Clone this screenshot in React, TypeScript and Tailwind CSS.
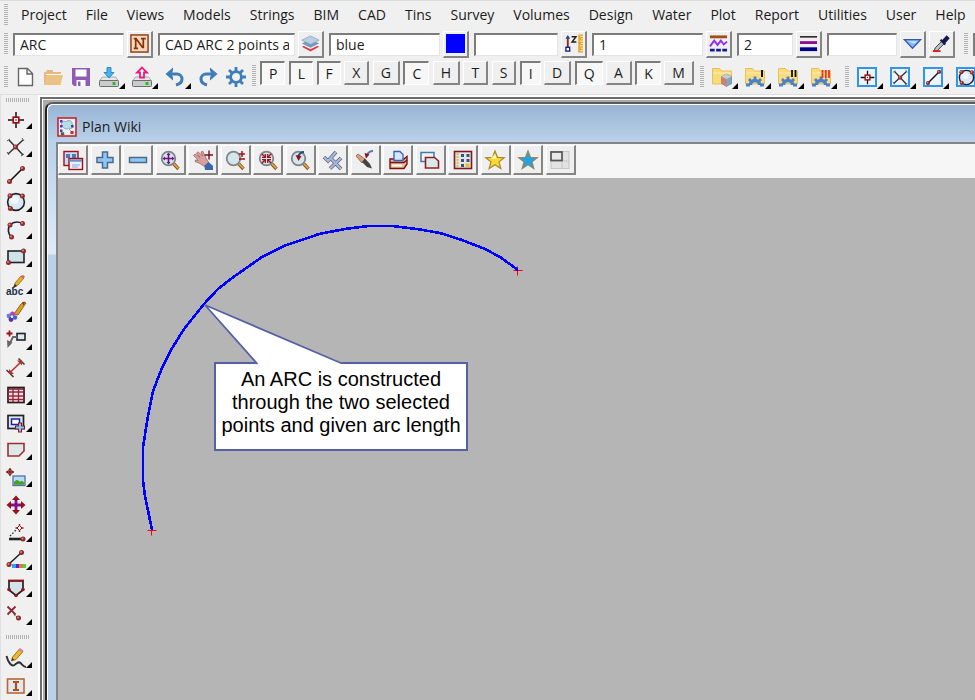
import React from "react";

type IconName = string;

const RED = "#a01018";

function Dot({ x, y }: { x: number; y: number }) {
  return (
    <g>
      <circle cx={x} cy={y} r="2.5" fill="#8c2a2e" />
      <circle cx={x - 0.5} cy={y - 0.6} r="1" fill="#d98a8a" />
    </g>
  );
}

function Lens() {
  return (
    <g>
      <path d="M13.5 13.5l5 5.5" stroke="#8a5a20" strokeWidth="3.4" />
      <path d="M13.5 13.5l5 5" stroke="#e8a850" strokeWidth="1.6" />
      <circle cx="8.5" cy="8.5" r="6.8" fill="#d5e6ea" stroke="#7c868c" strokeWidth="1.8" />
    </g>
  );
}

function Folder() {
  return (
    <g>
      <path d="M0.5 1.5h7l2 2.5h10v13h-19z" fill="#f9dc7c" stroke="#e6c060" />
      <path d="M1 6h18" stroke="#fce9a0" strokeWidth="1.5" />
    </g>
  );
}

function GearHalf() {
  return (
    <g fill="none" stroke="#4a80cc">
      <path d="M5.500 18a4.500 4.500 0 0 1 9 0" strokeWidth="3.400" />
      <path d="M10 13v-3.500M6.300 14.500L4 12M13.700 14.500L16 12M5 18H1M15 18h4" strokeWidth="2.800" />
    </g>
  );
}

const starPath = "M10 1l2.5 6.3 6.8.4-5.3 4.2 1.9 6.7L10 14.8l-5.9 3.8L6 11.9.7 7.7l6.8-.4z";

const pointShape = (
  <g>
    <path d="M10 2v16M2 10h16" stroke="#111" strokeWidth="1.5" />
    <rect x="7.2" y="7.2" width="5.6" height="5.6" fill="#fff" stroke={RED} strokeWidth="1.7" />
    <rect x="9.3" y="9.3" width="1.4" height="1.4" fill={RED} />
  </g>
);
const crossShape = (
  <g>
    <path d="M3 3l14 15M2 17L17 3" stroke="#333" strokeWidth="1.5" />
    <path d="M1 4l3-2M16 1l2 3M1 15l2 3M15 19l3-2" stroke="#555" strokeWidth="1" />
    <Dot x={9.5} y={10} />
  </g>
);
const lineShape = (
  <g>
    <path d="M3 17L17 3" stroke="#111" strokeWidth="1.6" />
    <Dot x={3.5} y={16.5} />
    <Dot x={16.5} y={3.5} />
  </g>
);
const circleShape = (
  <g>
    <circle cx="10" cy="10" r="8.4" fill="#d9e8f6" stroke="#222" strokeWidth="1.6" />
    <circle cx="8.5" cy="8" r="4" fill="#f0f7fd" />
    <Dot x={4} y={3.8} />
    <Dot x={16.4} y={4} />
    <Dot x={4.4} y={16.4} />
  </g>
);
const drive = (
  <g>
    <path d="M3.500 10h13l3 4h-19z" fill="#e4e6e8" stroke="#999" strokeWidth="0.8" />
    <rect x="0.5" y="13.500" width="19" height="6" rx="1" fill="#c8cccf" stroke="#6c6c6c" />
    <rect x="13.5" y="15" width="3" height="3" fill="#38b820" />
  </g>
);

const icons: Record<IconName, React.ReactNode> = {
  newFile: <path d="M3.5 1.5h9l5 5v12h-14zM12 1.5v5.5h5.500" fill="#fff" stroke="#666" strokeWidth="1.4" />,
  open: (
    <g>
      <path d="M1 17V5h2l1-2h6v2h8v5" fill="#e4b880" />
      <path d="M4 8h16l-2.500 10H1z" fill="#ecc284" />
      <path d="M3 7.500h15" stroke="#fff" />
    </g>
  ),
  save: (
    <g>
      <path d="M1 1h18v18H3l-2-2z" fill="#8e5bb5" />
      <path d="M4.500 2.500h11v7h-11zM5.500 13h9v6h-9z" fill="#fff" />
      <path d="M7 14.500h2.500v4.500H7z" fill="#8e5bb5" />
    </g>
  ),
  importIcon: (
    <g>
      {drive}
      <path d="M8 0.500h4v5h3L10 11 5 5.500h3z" fill="#48b4ea" stroke="#1878b8" strokeWidth="0.8" />
    </g>
  ),
  exportIcon: (
    <g>
      {drive}
      <path d="M8 10.500h4v-5h3L10 0.500 5 5.500h3z" fill="#fff" stroke="#f01878" strokeWidth="1.8" />
    </g>
  ),
  undo: (
    <g>
      <path d="M5 7h7a5 5 0 0 1 5 5c0 3-2 5-6 6" fill="none" stroke="#3f7cb8" strokeWidth="3" />
      <path d="M0.500 7L8 0.500v3L6.500 7 8 10.500v3z" fill="#3f7cb8" />
    </g>
  ),
  redo: (
    <g>
      <path d="M15 7H8a5 5 0 0 0-5 5c0 3 2 5 6 6" fill="none" stroke="#3f7cb8" strokeWidth="3" />
      <path d="M19.500 7L12 0.500v3L13.500 7 12 10.500v3z" fill="#3f7cb8" />
    </g>
  ),
  gear: (
    <g fill="none" stroke="#3f7cb8">
      <circle cx="10" cy="10" r="5.400" strokeWidth="2.800" />
      <path d="M10 0v4M10 16v4M0 10h4M16 10h4M3 3l2.800 2.800M14.200 14.200L17 17M3 17l2.800-2.800M14.200 5.800L17 3" strokeWidth="2.800" />
    </g>
  ),
  folderCube: (
    <g>
      <Folder />
      <path d="M14.500 7l5 2.500v7l-5 3-5-3v-7z" fill="#7aa8d0" stroke="#777" strokeWidth="0.600" />
      <path d="M14.500 12v7.500l-5-3v-7z" fill="#d08068" />
      <path d="M14.500 7l5 2.500-5 2.500-5-2.500z" fill="#c4ccd4" />
    </g>
  ),
  folder1: <g><Folder /><GearHalf /><path d="M17 3v7" stroke="#111" strokeWidth="2" /></g>,
  folder2: <g><Folder /><GearHalf /><path d="M14 3v7M17.500 3v7" stroke="#111" strokeWidth="1.800" /></g>,
  folder3: <g><Folder /><GearHalf /><path d="M11.500 3v8M14.800 3v8M18 3v8" stroke="#f03020" strokeWidth="1.800" /></g>,
  point: pointShape,
  cross: crossShape,
  line: lineShape,
  circle: circleShape,
  arc: (
    <g>
      <path d="M4 17A9 9 0 0 1 17 3.500L10 10z" fill="#e8f1fa" />
      <path d="M5.500 17A9 9 0 0 1 4 5Q9 0 16.500 3.500" fill="none" stroke="#222" strokeWidth="1.600" />
      <Dot x={4} y={5} /><Dot x={16.500} y={3.500} /><Dot x={5.500} y={17} />
    </g>
  ),
  rect: (
    <g>
      <rect x="2" y="4" width="16" height="11.500" fill="#cfe2e8" stroke="#222" strokeWidth="1.600" />
      <Dot x={17.500} y={4} /><Dot x={2.500} y={15.500} />
    </g>
  ),
  text: (
    <g>
      <path d="M8 12l1-4 6-7 3 2-6 7z" fill="#e8b020" stroke="#80601a" strokeWidth="0.700" />
      <path d="M14 1.500l3-1.500 2 1.500-1.500 2z" fill="#d86060" />
      <path d="M6 14l3-5 2 2z" fill="#333" />
      <text x="0" y="19.500" fontSize="10" fontWeight="700" fill="#1c3048" className="font-['Liberation_Sans',sans-serif]">abc</text>
    </g>
  ),
  paint: (
    <g>
      <path d="M8 12l7-10 3-2 2 1-8 12z" fill="#d8a020" stroke="#805010" strokeWidth="0.800" />
      <path d="M16 0l3 0-1.500 4z" fill="#9a3020" />
      <circle cx="6.500" cy="12" r="2.400" fill="#c040b0" /><circle cx="3" cy="14" r="2.400" fill="#6080e0" />
      <circle cx="5" cy="17.500" r="2.400" fill="#6030a0" /><circle cx="9" cy="15.500" r="2.200" fill="#4060d8" />
      <circle cx="6" cy="14.800" r="1.200" fill="#fff" />
    </g>
  ),
  leader: (
    <g>
      <path d="M0.500 3.500h6M3.500 0.500v6" stroke={RED} strokeWidth="1.800" />
      <rect x="11" y="3.500" width="8" height="6.500" fill="#d9eaf0" stroke="#222" strokeWidth="1.600" />
      <path d="M11 7H7l-4 8" stroke="#666" strokeWidth="1.800" fill="none" />
      <path d="M1 10l5.500 2.500L1.500 18z" fill="#666" />
    </g>
  ),
  dimension: (
    <g>
      <path d="M0.500 12l7 7M12.500 0.500l6 6" stroke="#444" strokeWidth="1.700" />
      <path d="M4 14.500L15 4" stroke="#c03030" strokeWidth="1.600" />
      <path d="M3 16v-5l5 5zM16 2.500v5l-5-5z" fill="#c03030" />
    </g>
  ),
  table: (
    <g>
      <rect x="2" y="2.500" width="16" height="15" fill="#fbe9ec" stroke="#2a1a20" strokeWidth="1.700" />
      <path d="M2.500 4h15" stroke="#701828" strokeWidth="1.500" />
      <path d="M2 7h16M2 11h16M2 14.500h16M7 4v13M12.500 4v13" stroke="#a02038" strokeWidth="1.400" />
    </g>
  ),
  viewport: (
    <g>
      <rect x="2" y="2.500" width="15.500" height="13" fill="#dbe8ee" stroke="#222" strokeWidth="1.700" />
      <rect x="5.500" y="6" width="8" height="5.500" fill="#fff" stroke="#2020b0" strokeWidth="1.500" />
      <path d="M12.500 10h3v3h3v3h-3v3h-3v-3h-3v-3h3z" fill="#90c8f0" stroke="#782030" strokeWidth="1.100" />
    </g>
  ),
  polygon: <path d="M2 3.500h16V11l-5 5H2z" fill="#dce8ea" stroke="#9a3030" strokeWidth="1.600" />,
  image: (
    <g>
      <path d="M4 0v8M0 4h8" stroke="#801818" strokeWidth="1.400" />
      <circle cx="4" cy="4" r="2.400" fill="none" stroke="#801818" />
      <rect x="7" y="8" width="12" height="9.500" fill="#b8daf4" stroke="#5570a8" strokeWidth="1.300" />
      <path d="M8 16.800v-3l3-2 3 2 2-1 2.200 2v2z" fill="#48a020" />
    </g>
  ),
  move: (
    <g>
      <path d="M10 3v14M3 10h14" stroke="#801080" strokeWidth="2.800" />
      <path d="M10 0.500l4 4.500H6zM10 19.500l4-4.500H6zM0.500 10L5 6v8zM19.500 10L15 6v8z" fill="#98101c" />
    </g>
  ),
  snap: (
    <g>
      <path d="M13.500 1v8M9.500 5h8" stroke={RED} strokeWidth="1.400" />
      <path d="M13.500 2.500L16 5l-2.500 2.500L11 5z" fill="#fff" stroke={RED} />
      <path d="M3 16h14" stroke="#222" strokeWidth="2.600" />
      <path d="M4 13l6-6" stroke="#222" strokeWidth="1.300" strokeDasharray="1.500 1.800" />
      <Dot x={17} y={16} />
    </g>
  ),
  colourLine: (
    <g>
      <path d="M3 14L15.500 2.500" stroke="#222" strokeWidth="1.600" /><Dot x={3} y={14.500} /><Dot x={15.500} y={2.500} />
      <rect x="6" y="14" width="4" height="4" fill="#30a0f8" /><rect x="10" y="14" width="3.500" height="4" fill="#6020c0" />
      <rect x="13.500" y="14" width="3.500" height="4" fill="#f87028" /><rect x="17" y="14" width="3" height="4" fill="#30e830" />
    </g>
  ),
  shield: (
    <g>
      <path d="M3 3h14v9l-7 5.500L3 12z" fill="#d3e4e8" stroke="#222" strokeWidth="1.700" />
      <path d="M2 2.500h16" stroke={RED} strokeWidth="1.800" />
      <circle cx="3" cy="11.500" r="1.800" fill={RED} /><circle cx="17" cy="11.500" r="1.800" fill={RED} /><circle cx="10" cy="17.500" r="1.800" fill={RED} />
    </g>
  ),
  deletePoint: <g><path d="M1.500 1.500l8 8M9.500 1.500l-8 8" stroke="#902830" strokeWidth="1.800" /><path d="M8 9l4 4" stroke="#555" strokeWidth="1.400" strokeDasharray="2 1" /><Dot x={12.500} y={13} /></g>,
  freehand: (
    <g>
      <path d="M0.500 8c1.500 6 5 11 8 9s4-4 6-2 3 4 5.500 4" fill="none" stroke="#333" strokeWidth="2" />
      <path d="M5.500 13l1-4 7-8 3.500 2.500-7 8z" fill="#f0b828" stroke="#80601a" strokeWidth="0.800" />
      <path d="M12.500 2l1.500-2 3.500 2.500L16 4.500z" fill="#e08090" /><path d="M5.500 13l.7-3 2 1.600z" fill="#333" />
    </g>
  ),
  textBox: (
    <g>
      <rect x="1.500" y="3" width="16.500" height="14" fill="#deeaee" stroke="#b86838" strokeWidth="1.600" />
      <path d="M7 6h6M7 14h6M10 6v8" stroke="#b05020" strokeWidth="2.200" />
    </g>
  ),
  nBadge: (
    <g>
      <rect x="1" y="1" width="18" height="18" fill="#f6d8bc" stroke="#8a3c12" strokeWidth="1.500" />
      <path d="M4 4.800h3M11.500 4.800h5M4 15.200h4.500M6 5v10M14 5v10M6.500 5l7 9.500" fill="none" stroke="#8a3008" strokeWidth="1.800" />
    </g>
  ),
  layers: (
    <g>
      <path d="M10 9l9 4.500-9 5-9-5z" fill="#e03848" /><path d="M10 6.500l9 5-9 4.500-9-4.500z" fill="#f0f4f8" />
      <path d="M10 5.500l9 4.500-9 4.500L1 10z" fill="#7898b8" /><path d="M10 2l9 4.500-9 4.500-9-4.500z" fill="#b8d0e4" stroke="#7898b8" strokeWidth="0.700" />
    </g>
  ),
  blue: <rect x="0" y="0" width="20" height="20" fill="#0000ff" />,
  zRuler: (
    <g>
      <path d="M4 3v12" stroke="#803020" strokeWidth="2" /><path d="M1.500 5L4 1l2.500 4z" fill="#284880" />
      <rect x="2" y="14" width="4" height="4" fill="#fff" stroke="#102080" strokeWidth="1.400" />
      <path d="M8 3h4.500L8.500 8.500H13" fill="none" stroke="#222" strokeWidth="1.600" />
      <rect x="15" y="0.500" width="5" height="19" fill="#e8a830" /><path d="M17 2.500h3M18 5h2M17 7.500h3M18 10h2M17 12.500h3M18 15h2M17 17.500h3" stroke="#fff0b0" />
    </g>
  ),
  lineStyle: (
    <g>
      <path d="M1 3h18" stroke="#a05010" strokeWidth="3" />
      <path d="M1 13l4.500-6 3.500 4.500 3.500-4.500 3 4 3.500-3" fill="none" stroke="#9030f0" strokeWidth="2" />
      <path d="M1 17h18" stroke="#102090" strokeWidth="3" strokeDasharray="5 1.500" />
    </g>
  ),
  weight: <g><path d="M1 3h18" stroke="#111" strokeWidth="1.500" /><path d="M1 9h18" stroke="#901090" strokeWidth="3" /><path d="M1 16h18" stroke="#000088" strokeWidth="4" /></g>,
  down: <g><path d="M1.500 6h17l-8.500 9z" fill="#88bcf4" stroke="#3858b0" strokeWidth="1.400" /><path d="M5 7.500h10l-3 2.500z" fill="#d0e6fc" /></g>,
  dropper: (
    <g>
      <path d="M2 18.500l1.500-4L10 8l2.500 2.500-7 7z" fill="#b8c4c8" stroke="#333" />
      <path d="M9 6l5 5M11.500 7.500l4-4.500 1.500 1.500-4 4.500z" fill="#181850" stroke="#181850" strokeWidth="2.400" />
      <path d="M1 18h8" stroke="#e02020" strokeWidth="2" />
    </g>
  ),
  windows: (
    <g>
      <rect x="1" y="1.500" width="14" height="14" fill="#c8dcf4" stroke={RED} strokeWidth="1.400" />
      <path d="M3 4h4v4H3zM9 4h4v4H9z" fill="#5078c0" />
      <rect x="6" y="8.500" width="13.500" height="11" fill="#e8f0fc" stroke={RED} strokeWidth="1.400" />
      <path d="M6.500 10.500h12.500" stroke="#6a90d0" strokeWidth="2.400" /><path d="M9 15h8M9 17h6" stroke="#88a8d8" />
    </g>
  ),
  plus: <path d="M7.500 2h5v5.500H18v5h-5.500V18h-5v-5.500H2v-5h5.500z" fill="#8cc8f4" stroke="#506888" strokeWidth="1.500" />,
  minus: <rect x="1.500" y="7.500" width="17" height="5" fill="#8cc8f4" stroke="#506888" strokeWidth="1.500" />,
  zoomAll: <g><Lens /><path d="M8.500 4v9M4 8.500h9" stroke="#701080" strokeWidth="1.600" /><path d="M8.500 2.500l2 2.500h-4zM8.500 14.500l2-2.500h-4zM2.500 8.500L5 6.500v4zM14.500 8.500L12 6.500v4z" fill="#701080" /></g>,
  pan: (
    <g>
      <path d="M0.500 5.500L2 4l5 3.500L3.500 3 5 1.800 9.500 6 8 2l1.800-.8L13 8l3 5-4 4-5-3.500-5-2 .5-1.500 3 .5z" fill="#d8a09c" stroke="#a06868" strokeWidth="0.800" />
      <path d="M11.500 15.500l4-3.500 4.500 4v4h-8z" fill="#3868a8" />
      <path d="M16 0.500v9M11.500 5h8.500" stroke="#701020" strokeWidth="1.400" />
    </g>
  ),
  zoomPm: <g><Lens /><path d="M17 1v6M14 4h6M14 9h6" stroke={RED} strokeWidth="1.500" /></g>,
  zoomIn: <g><Lens /><path d="M4 4l3 3M13 4l-3 3M4 13l3-3M13 13l-3-3" stroke={RED} strokeWidth="1.400" /><path d="M7.300 4v3.300H4M9.700 4v3.300H13M7.300 13V9.700H4M9.700 13V9.700H13" fill="none" stroke={RED} strokeWidth="1.300" /></g>,
  zoomPrev: <g><Lens /><path d="M14 2c-3 0-5 2-6 5" stroke="#284880" strokeWidth="2" fill="none" /><path d="M5.500 5l6 1-3 5z" fill="#901020" /></g>,
  checks: (
    <g fill="none">
      <path d="M1 7l4 4 8-9M7 18.500L18 8M8 8.500l10 10.500" stroke="#785068" strokeWidth="3.600" />
      <path d="M1 7l4 4 8-9M7 18.500L18 8M8 8.500l10 10.500" stroke="#98bce0" strokeWidth="2.400" />
    </g>
  ),
  brush: (
    <g>
      <path d="M1 6l2-2 7 5-3 4z" fill="#d8a080" stroke="#806050" strokeWidth="0.800" /><path d="M7 12l3-3.500 5 5.500 2 4.500-5-1.500z" fill="#444" />
      <path d="M18 1c-4 0-5 2-6 4" stroke="#5878a8" strokeWidth="2" fill="none" /><path d="M9.500 3l5 1.500-3.500 4z" fill="#901020" />
    </g>
  ),
  printer: (
    <g>
      <path d="M2 9h14l3-2.500v7.500l-3 4.500H2z" fill="#e0c098" stroke="#801010" strokeWidth="1.400" />
      <path d="M6 10.500V1.500h6l3 3v6z" fill="#d8e8fc" stroke="#3060c0" strokeWidth="1.300" />
      <path d="M2 12.500h14l3-2.500" fill="none" stroke="#801010" strokeWidth="1.500" /><path d="M4 15.500h10" stroke="#fff" strokeWidth="1.800" />
    </g>
  ),
  copy: (
    <g>
      <path d="M1 2.500h13v9H1z" fill="#eef4f8" stroke="#4878a8" strokeWidth="1.500" />
      <path d="M5.500 7.500h9l4 3.500v7h-13z" fill="#d8e8ec" stroke="#902020" strokeWidth="1.600" />
    </g>
  ),
  grid: (
    <g>
      <rect x="1.500" y="1.500" width="17" height="17" fill="#dfe6ee" stroke="#801820" strokeWidth="1.600" />
      <path d="M4.500 3v14" stroke="#e0c030" strokeWidth="2" strokeDasharray="2 1" />
      <path d="M8 4h3v3H8zM13.500 4h3v3h-3zM8 9h3v3H8zM13.500 9h3v3h-3zM8 14h3v3H8z" fill="#405070" /><path d="M12.500 13.500h4v3.500h-4z" fill="#e8c020" />
    </g>
  ),
  star: <g><path d={starPath} fill="#fcd830" stroke="#a88830" strokeWidth="1.200" /><path d="M10 4l1.500 5-6-.500z" fill="#fff6a8" /></g>,
  starBlue: <path d={starPath} fill="#20a4e4" stroke="#988860" strokeWidth="1.200" />,
  panes: (
    <g>
      <rect x="1" y="1.500" width="18" height="17" fill="#e2e2e2" stroke="#c4c4c4" /><path d="M12 2v16M1 11h18" stroke="#c4c4c4" />
      <rect x="1" y="2" width="11" height="8.500" fill="#e8e8e8" stroke="#555" strokeWidth="1.700" />
    </g>
  ),
  plan: (
    <g>
      <rect x="1" y="1" width="18" height="18" fill="#eaf4f6" stroke="#d02030" strokeWidth="1.600" />
      <path d="M5 9c-2-4 2-6 4-4 2-3 7-1 6 2 3 2 0 6-3 4-2 2-5 1-7-2z" fill="#b8dce8" stroke="#70a0b0" strokeWidth="0.800" />
      <path d="M3 3h2.500v2.500H3zM3 8h2.500v2.500H3zM3 12.500h2.500V15H3z" fill="#6030b0" />
      <path d="M4 15.500h3V18H4zM12 12l3 3" fill="#189030" stroke="#555" strokeWidth="0.500" /><path d="M13.500 14h3v3h-3z" fill="#e02020" /><path d="M14 8h2.500v2.500H14z" fill="#304890" />
    </g>
  ),
};

function Icon({ name, className = "size-5" }: { name: IconName; className?: string }) {
  return (
    <svg viewBox="0 0 20 20" className={`${className} shrink-0 overflow-visible`} aria-hidden="true">
      {icons[name]}
    </svg>
  );
}

function Corner() {
  return (
    <svg viewBox="0 0 6 6" className="size-[6px] shrink-0" aria-hidden="true">
      <path d="M6 0v6H0z" fill="#000" />
    </svg>
  );
}

function Grip() {
  return (
    <span className="h-[22px] w-1 shrink-0 bg-[repeating-linear-gradient(to_bottom,#b4b4b4_0px,#b4b4b4_1px,#f0f0f0_1px,#f0f0f0_2px)]" />
  );
}

function GripFlat() {
  return (
    <span className="ml-[5px] h-1 w-6 shrink-0 bg-[repeating-linear-gradient(to_right,#b4b4b4_0px,#b4b4b4_1px,#f0f0f0_1px,#f0f0f0_2px)]" />
  );
}

const raised =
  "flex shrink-0 items-center justify-center border-t border-l border-r-2 border-b-2 border-t-white border-l-white border-r-[#858585] border-b-[#858585] bg-[#efefef]";

function RaisedButton({ name, label }: { name: IconName; label: string }) {
  return (
    <button aria-label={label} className={`${raised} h-[27px] w-[26px]`}>
      <Icon name={name} className="size-[19px]" />
    </button>
  );
}

function Field({ label, value, width, name, button }: { label: string; value: string; width: string; name: IconName; button: string }) {
  return (
    <div className="flex shrink-0 items-center gap-[3px]">
      <input
        aria-label={label}
        defaultValue={value}
        className={`${width} h-[23px] border-t-2 border-l-2 border-r border-b border-t-[#7c7c7c] border-l-[#7c7c7c] border-r-[#e4e4e4] border-b-[#e4e4e4] bg-white px-[5px] text-sm leading-5 outline-none`}
      />
      <RaisedButton name={name} label={button} />
    </div>
  );
}

function ToolButton({ name, label, corner = false, boxed = false }: { name: IconName; label: string; corner?: boolean; boxed?: boolean }) {
  return (
    <button aria-label={label} className={`flex h-6 shrink-0 items-end pl-1 ${corner ? "w-[33px]" : "w-7"}`}>
      <span className={`flex size-5 shrink-0 items-center justify-center self-center ${boxed ? "border-2 border-[#2f96f0] bg-[#eef4fa]" : ""}`}>
        <Icon name={name} className={boxed ? "size-[17px]" : "size-5"} />
      </span>
      {corner && <Corner />}
    </button>
  );
}

const menus = ["Project", "File", "Views", "Models", "Strings", "BIM", "CAD", "Tins", "Survey", "Volumes", "Design", "Water", "Plot", "Report", "Utilities", "User", "Help"];

const snaps: [string, boolean][] = [
  ["P", true], ["L", true], ["F", true], ["X", false], ["G", false], ["C", true], ["H", false], ["T", false],
  ["S", false], ["I", true], ["D", false], ["Q", true], ["A", false], ["K", true], ["M", false],
];

const cadTools: [IconName, string][] = [
  ["point", "Point"], ["cross", "Intersection"], ["line", "Line"], ["circle", "Circle"], ["arc", "Arc"], ["rect", "Rectangle"],
  ["text", "Text"], ["paint", "Symbol"], ["leader", "Leader"], ["dimension", "Dimension"], ["table", "Table"], ["viewport", "Viewport"],
  ["polygon", "Polygon"], ["image", "Image"], ["move", "Move"], ["snap", "Extend"], ["colourLine", "Colour"], ["shield", "Polygon edit"], ["deletePoint", "Delete point"],
];

const planTools: [IconName, string][] = [
  ["windows", "Menu"], ["plus", "Add"], ["minus", "Remove"], ["zoomAll", "Fit"], ["pan", "Pan"], ["zoomPm", "Zoom"],
  ["zoomIn", "Shrink"], ["zoomPrev", "Previous view"], ["checks", "Toggle"], ["brush", "Redraw"], ["printer", "Plot"], ["copy", "Copy view"],
  ["grid", "Settings"], ["star", "Favourites"], ["starBlue", "Shared favourites"], ["panes", "Layout"],
];

function SideTool({ name, label }: { name: IconName; label: string }) {
  return (
    <button aria-label={label} className="flex min-h-0 flex-1 items-center pl-[5px]">
      <Icon name={name} />
      <span className="mt-[13px] flex"><Corner /></span>
    </button>
  );
}

export default function App() {
  return (
    <div className="flex h-screen flex-col overflow-hidden border-t border-[#dcdcdc] bg-[#f0f0f0] font-['Open_Sans','Noto_Sans',sans-serif] text-sm text-[#1c1c1c]">
      <nav className="flex h-7 shrink-0 items-center pl-1">
        <Grip />
        <div className="flex flex-1 items-center gap-[19px] pl-[13px]">
          {menus.map((m) => (
            <button key={m} className="leading-5">{m}</button>
          ))}
        </div>
      </nav>

      <div className="flex h-[30px] shrink-0 items-center gap-[5px] overflow-hidden pl-1">
        <Grip />
        <Field label="Name" value="ARC" width="w-[111px]" name="nBadge" button="Names" />
        <Field label="Model" value="CAD ARC 2 points and length" width="w-[137px]" name="layers" button="Models" />
        <Field label="Colour" value="blue" width="w-[111px]" name="blue" button="Pick colour" />
        <Field label="Height" value="" width="w-[84px]" name="zRuler" button="Pick height" />
        <Field label="Line style" value="1" width="w-[111px]" name="lineStyle" button="Line styles" />
        <Field label="Weight" value="2" width="w-[56px]" name="weight" button="Weights" />
        <div className="flex shrink-0 gap-[3px]">
          <Field label="Tin" value="" width="w-[70px]" name="down" button="Tins" />
          <RaisedButton name="dropper" label="Pick attributes" />
        </div>
        <span className="flex pl-1"><Grip /></span>
        <input aria-label="Search" className="h-[23px] min-w-0 flex-1 border-t-2 border-l-2 border-[#7c7c7c] bg-white" />
      </div>

      <div className="flex h-9 shrink-0 items-start overflow-hidden border-b border-[#dedede] pt-[2px] pl-1">
        <div className="flex shrink-0 items-center pt-1">
          <Grip />
          <div className="flex pl-[3px]">
            <ToolButton name="newFile" label="New" />
            <ToolButton name="open" label="Open" />
            <ToolButton name="save" label="Save" />
            <ToolButton name="importIcon" label="Import" corner />
            <ToolButton name="exportIcon" label="Export" corner />
            <ToolButton name="undo" label="Undo" corner />
            <ToolButton name="redo" label="Redo" />
            <ToolButton name="gear" label="Options" />
          </div>
        </div>
        <div className="flex pt-1 pl-[2px]"><Grip /></div>
        <div className="flex w-[438px] shrink-0 justify-between pl-1">
          {snaps.map(([k, on]) => (
            <button
              key={k}
              aria-pressed={on}
              className={
                on
                  ? "h-6 border-t-2 border-l-2 border-r border-b border-t-[#7c7c7c] border-l-[#7c7c7c] border-r-white border-b-white bg-[#f7f7f7] px-[7px] leading-5"
                  : "h-6 border-t border-l border-r-2 border-b-2 border-t-white border-l-white border-r-[#858585] border-b-[#858585] bg-[#efefef] px-[7px] leading-5"
              }
            >
              {k}
            </button>
          ))}
        </div>
        <div className="flex shrink-0 items-center pt-1 pl-[6px]">
          <Grip />
          <div className="flex pl-[4px]">
            <ToolButton name="folderCube" label="Project folder" corner />
            <ToolButton name="folder1" label="Chain one" corner />
            <ToolButton name="folder2" label="Chain two" corner />
            <ToolButton name="folder3" label="Chain three" corner />
          </div>
          <div className="flex pl-[5px]"><Grip /></div>
          <div className="flex pl-[4px]">
            <ToolButton name="point" label="Point snap" corner boxed />
            <ToolButton name="cross" label="Cross snap" corner boxed />
            <ToolButton name="line" label="Line snap" corner boxed />
            <ToolButton name="circle" label="Circle snap" corner boxed />
          </div>
        </div>
      </div>

      <div className="flex min-h-0 flex-1">
        <aside className="flex w-[38px] shrink-0 flex-col border-l border-[#e0e0e0] pt-[3px]">
          <GripFlat />
          <div className="mt-1 flex h-[523px] shrink-0 flex-col">
            {cadTools.map(([n, l]) => <SideTool key={n} name={n} label={l} />)}
          </div>
          <div className="flex pt-[6px]"><GripFlat /></div>
          <div className="mt-[5px] flex h-14 shrink-0 flex-col">
            <SideTool name="freehand" label="Freehand" />
            <SideTool name="textBox" label="Text box" />
          </div>
        </aside>

        <main className="flex min-w-0 flex-1 flex-col border-t-2 border-l-2 border-white">
          <div className="flex min-h-0 flex-1 flex-col border-t-2 border-l-2 border-[#6c6c6c]">
            <div className="flex min-h-0 flex-1 flex-col border-t border-l border-white bg-[#ababab] pt-[2px] pl-[2px]">
              <section className="flex min-h-0 flex-1 flex-col rounded-tl-lg border-t-2 border-l-2 border-t-[#5c5c5c] border-l-[#222] bg-white">
                <div className="flex min-h-0 flex-1 flex-col rounded-tl-md border-t border-l border-white bg-[linear-gradient(to_bottom,#98b4d3_0px,#b9d1ea_36px,#dfeaf6_149px,#b9d1ea_150px)] pl-2">
                  <header className="flex h-[37px] shrink-0 items-center gap-[5px] pt-[6px] pl-px">
                    <Icon name="plan" />
                    <h1 className="leading-5">Plan Wiki</h1>
                  </header>
                  <div className="flex min-h-0 flex-1 flex-col border-t-2 border-l-2 border-[#858585]">
                    <div className="h-[34px] shrink-0 bg-[#f6f6f6] pt-px">
                      <div className="flex w-[518px] justify-between">
                        {planTools.map(([n, l]) => (
                          <button key={n} aria-label={l} className={`${raised} h-[30px] w-[30px]`}>
                            <Icon name={n} />
                          </button>
                        ))}
                      </div>
                    </div>
                    <div className="relative min-h-0 flex-1 overflow-hidden bg-[#b5b5b5]">
                      <svg viewBox="58 178 917 522" width="917" height="522" className="absolute top-0 left-0" aria-hidden="true">
                        <path d="M147.500 530.500h9M151.500 526.500v9M513.500 270.500h9M517.500 266.500v9" stroke="#ff0000" />
                        <polyline
                          points="152,530 145,496 143,480 143,447 148,416 153,391 162,368 171,350 184,329 204,304 218,289 232,278 262,257 284,246 319,234 345,229 369,226 392,226 417,229 440,233 462,240 485,249 500,257 518,270"
                          fill="none" stroke="#0000ff" strokeWidth="2.600" shapeRendering="crispEdges"
                        />
                      </svg>
                      <div className="absolute top-[184px] left-[156px] h-[89px] w-[254px] border-2 border-[#5560a8] bg-white pt-[4px] text-center font-['Liberation_Sans',Arial,sans-serif] text-xl leading-[23px] text-black">
                        An ARC is constructed<br />through the two selected<br />points and given arc length
                      </div>
                      <svg viewBox="200 300 150 70" width="150" height="70" className="absolute top-[122px] left-[142px]" aria-hidden="true">
                        <path d="M258 365L205 305 342 363v2z" fill="#fff" />
                        <path d="M257.500 364L205 305l137 58.500" fill="none" stroke="#5560a8" strokeWidth="1.800" />
                      </svg>
                    </div>
                  </div>
                </div>
              </section>
            </div>
          </div>
        </main>
      </div>
    </div>
  );
}
